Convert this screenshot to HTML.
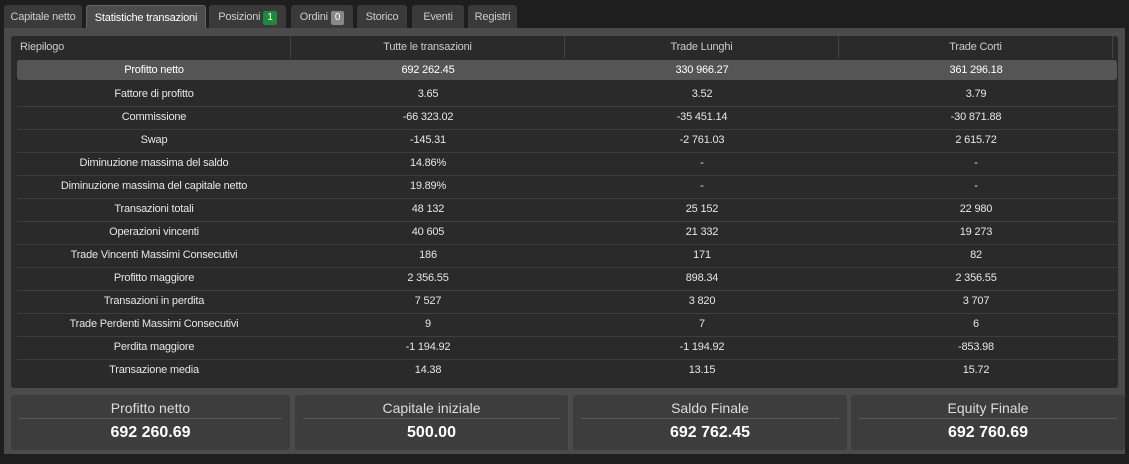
<html><head><style>
body{margin:0;background:#1e1e1e;width:1129px;height:464px;overflow:hidden;font-family:"Liberation Sans",sans-serif;font-size:11px;color:#e6e6e6;position:relative;letter-spacing:-0.2px}
.tab{position:absolute;top:5px;height:23px;line-height:24px;background:#3a3a3a;color:#ccc;font-size:11px;text-align:center;border-radius:3px 3px 0 0}
.tab.a{background:#4c4c4c;color:#fff;border:1px solid #666;border-bottom:none;height:24px}
.b{display:inline-block;padding:0 4px;border-radius:2px;line-height:14px;font-size:10px;color:#fff;margin-left:3px}
.panel{position:absolute;left:4px;top:28px;width:1121px;height:426px;background:#4b4b4b}
.tbl{position:absolute;left:7px;top:8px;width:1107px;height:352px;background:#2a2a2a;border-radius:3px}
.row{position:absolute;left:6px;width:1100px;height:23px;line-height:22px;border-bottom:1px solid #3e3e3e}
.row div{position:absolute;top:0;width:274px;text-align:center}
.hl{background:#555;border-radius:3px;border-bottom:none;color:#fff}
.card{position:absolute;top:367px;height:55px;background:#3d3d3d;border-radius:3px;letter-spacing:0}
.card .t{margin:5px 8px 0;border-bottom:1px solid #5a5a5a;text-align:center;font-size:14px;color:#ddd;height:18px;line-height:17px}
.card .v{text-align:center;font-size:16px;font-weight:bold;color:#fff;margin-top:5px}
.foot{position:absolute;top:458px;left:830px;font-size:11px;color:#ccc}
</style></head><body>
<div class="tab" style="left:4px;width:78px">Capitale netto</div>
<div class="tab a" style="left:86px;width:118px">Statistiche transazioni</div>
<div class="tab" style="left:209px;width:77px">Posizioni<span class="b" style="background:#1c8a3a">1</span></div>
<div class="tab" style="left:291px;width:62px">Ordini<span class="b" style="background:#888">0</span></div>
<div class="tab" style="left:357px;width:50px">Storico</div>
<div class="tab" style="left:412px;width:52px">Eventi</div>
<div class="tab" style="left:468px;width:49px">Registri</div>
<div class="panel">
<div class="tbl">
<div class="row" style="top:0;border:none;color:#ccc"><div style="left:0;text-align:left;padding-left:3px;width:270px;border-right:1px solid #444">Riepilogo</div><div style="left:274px;border-right:1px solid #444;width:273px">Tutte le transazioni</div><div style="left:548px;border-right:1px solid #444;width:273px">Trade Lunghi</div><div style="left:822px;border-right:1px solid #444;width:273px">Trade Corti</div></div>
<div id="rows"></div>
</div>
<div class="card" style="left:7px;width:279px"><div class="t">Profitto netto</div><div class="v">692 260.69</div></div>
<div class="card" style="left:291px;width:273px"><div class="t">Capitale iniziale</div><div class="v">500.00</div></div>
<div class="card" style="left:569px;width:274px"><div class="t">Saldo Finale</div><div class="v">692 762.45</div></div>
<div class="card" style="left:847px;width:274px"><div class="t">Equity Finale</div><div class="v">692 760.69</div></div>
</div>
<script>
var d=[["Profitto netto","692 262.45","330 966.27","361 296.18"],["Fattore di profitto","3.65","3.52","3.79"],["Commissione","-66 323.02","-35 451.14","-30 871.88"],["Swap","-145.31","-2 761.03","2 615.72"],["Diminuzione massima del saldo","14.86%","-","-"],["Diminuzione massima del capitale netto","19.89%","-","-"],["Transazioni totali","48 132","25 152","22 980"],["Operazioni vincenti","40 605","21 332","19 273"],["Trade Vincenti Massimi Consecutivi","186","171","82"],["Profitto maggiore","2 356.55","898.34","2 356.55"],["Transazioni in perdita","7 527","3 820","3 707"],["Trade Perdenti Massimi Consecutivi","9","7","6"],["Perdita maggiore","-1 194.92","-1 194.92","-853.98"],["Transazione media","14.38","13.15","15.72"]];
var h="";d.forEach(function(r,i){h+='<div class="row'+(i==0?' hl':'')+'" style="top:'+(24+i*23)+'px;'+(i==0?'height:20px;line-height:20px':'')+(i==13?';border:none':'')+'">';r.forEach(function(c,j){h+='<div style="left:'+(j*274)+'px">'+c+'</div>'});h+='</div>'});
document.getElementById("rows").innerHTML=h;
</script>
</body></html>
